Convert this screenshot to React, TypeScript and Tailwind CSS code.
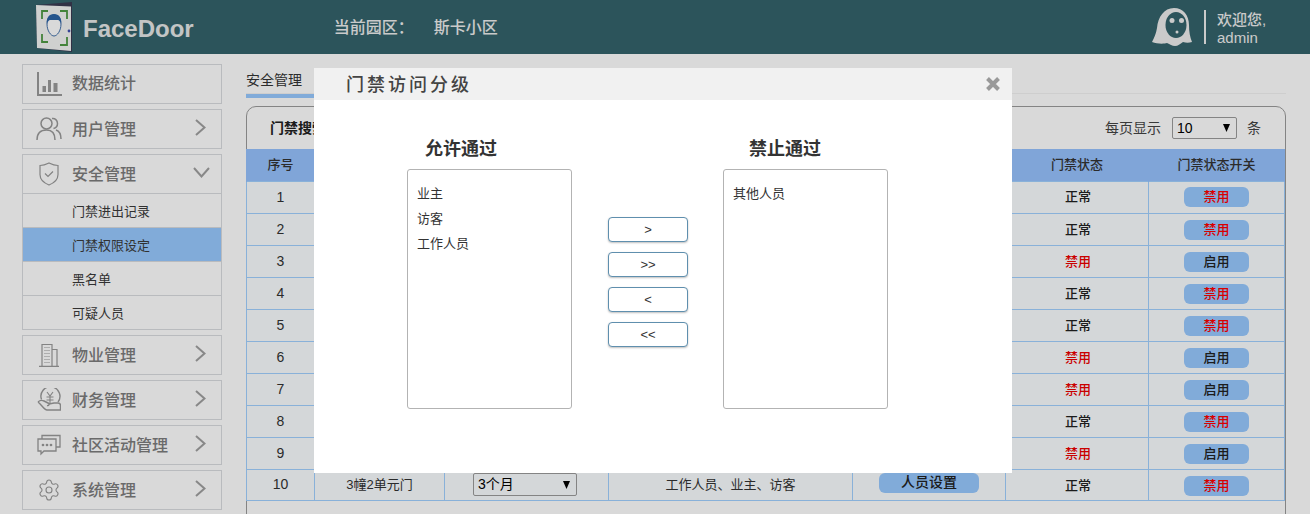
import type { ReactNode } from "react";
import { Settings } from "lucide-react";

const FONT = "font-['Liberation_Sans','Noto_Sans_CJK_SC',sans-serif]";

const IconChart = () => (
  <svg width="26" height="26" viewBox="0 0 26 26" fill="none">
    <path d="M2 1v23h24" stroke="#9a9a9a" strokeWidth="2" />
    <rect x="6.5" y="15" width="3.5" height="6" fill="#9a9a9a" />
    <rect x="12" y="9" width="3" height="12" fill="#9a9a9a" />
    <rect x="17.5" y="12" width="4" height="9" fill="#9a9a9a" />
  </svg>
);
const IconUsers = () => (
  <svg width="26" height="26" viewBox="0 0 26 26" fill="none" stroke="#9a9a9a" strokeWidth="1.5">
    <circle cx="10.5" cy="7.5" r="5.5" />
    <path d="M1 24c0-7 4-10 9.5-10S19 17 19 24" />
    <path d="M16 2.500c3-.6 5.500 1.800 5.500 5 0 2.500-1.500 4.500-4 5" />
    <path d="M20 14c3 1 5 4 5 9" />
  </svg>
);
const IconShield = () => (
  <svg width="20" height="24" viewBox="0 0 20 24" fill="none" stroke="#9a9a9a" strokeWidth="1.2">
    <path d="M1 3.500C4 3.500 7 2.500 10 1c3 1.500 6 2.500 9 2.500v9c0 5-4 8.500-9 10.500C5 21 1 17.500 1 12.500z" />
    <path d="M6 11.500l3 3 5-5" />
  </svg>
);
const IconBuilding = () => (
  <svg width="20" height="24" viewBox="0 0 20 24" fill="none" stroke="#9a9a9a">
    <path d="M0 23.500h20" strokeWidth="1.500" />
    <path d="M3 23V1.500h10V23M13 6.500h5V23" strokeWidth="1.200" />
    <path d="M5.500 4.500h5M5.500 7.500h5M5.500 10.500h5M5.500 13.500h5M5.500 16.500h5M5.500 19.500h5" strokeWidth="1.200" strokeDasharray="1 1" />
  </svg>
);
const IconMoney = () => (
  <svg width="24" height="24" viewBox="0 0 24 24" fill="none" stroke="#9a9a9a" strokeWidth="1.400">
    <path d="M4.500 11.500A9.500 9.500 0 1 1 21 14" />
    <path d="M10 4l3 4 3-4M9.500 9h7M9.500 12h7M13 8v7" strokeWidth="1.100" />
    <path d="M1 14c2-2 4-2 6-1l4 2c2 1 1 3-1 2.500M12 16l5-1h4c2 0 2.500 1 2.500 2.500V22H10c-3 0-5-5-9-8" />
  </svg>
);
const IconChat = () => (
  <svg width="24" height="22" viewBox="0 0 24 22" fill="none" stroke="#9a9a9a" strokeWidth="1.300">
    <path d="M1 5h18v12H7l-3 3v-3H1z" />
    <path d="M5 5V1.500h18V13h-4" />
    <circle cx="6" cy="11" r=".7" fill="#9a9a9a" />
    <circle cx="10" cy="11" r=".7" fill="#9a9a9a" />
    <circle cx="14" cy="11" r=".7" fill="#9a9a9a" />
  </svg>
);

const ChevronR = () => (
  <svg width="11" height="17" viewBox="0 0 11 17" fill="none" className="mr-[15px] mb-[4px] ml-auto">
    <path d="M1 1l8.500 7.500L1 16" stroke="#a0a0a0" strokeWidth="2" />
  </svg>
);
const ChevronD = () => (
  <svg width="17" height="11" viewBox="0 0 17 11" fill="none" className="mr-[11px] mb-[4px] ml-auto">
    <path d="M1 1l7.500 8.500L16 1" stroke="#a0a0a0" strokeWidth="2" />
  </svg>
);

function NavHead({ icon, label, open, arrow = true }: { icon: ReactNode; label: string; open?: boolean; arrow?: boolean }) {
  return (
    <div className="flex h-[38px] items-center">
      <div className="flex w-[49px] justify-center pl-[2px]">{icon}</div>
      <span className={`text-[16px] font-medium leading-none text-[#7d7d7d] ${arrow ? "pt-[2px]" : ""}`}>{label}</span>
      {arrow && (open ? <ChevronD /> : <ChevronR />)}
    </div>
  );
}

function NavItem(props: { icon: ReactNode; label: string; arrow?: boolean }) {
  return (
    <div className="border border-[#dadce0]">
      <NavHead {...props} />
    </div>
  );
}

const subs = ["门禁进出记录", "门禁权限设定", "黑名单", "可疑人员"];

function Sidebar() {
  return (
    <aside className="flex w-[200px] shrink-0 flex-col gap-[5px]">
      <NavItem icon={<IconChart />} label="数据统计" arrow={false} />
      <NavItem icon={<IconUsers />} label="用户管理" />
      <div className="border border-[#dadce0]">
        <NavHead icon={<IconShield />} label="安全管理" open />
        {subs.map((s, i) => (
          <div
            key={s}
            className={`flex h-[34px] items-center border-t border-[#dadce0] pl-[49px] pt-[2px] text-[13px] text-[#3a3a3a] ${i === 1 ? "bg-[#98c9ff]" : ""}`}
          >
            {s}
          </div>
        ))}
      </div>
      <NavItem icon={<IconBuilding />} label="物业管理" />
      <NavItem icon={<IconMoney />} label="财务管理" />
      <NavItem icon={<IconChat />} label="社区活动管理" />
      <NavItem icon={<Settings size={24} strokeWidth={1.1} color="#9a9a9a" />} label="系统管理" />
    </aside>
  );
}

const status = ["正常", "正常", "禁用", "正常", "正常", "禁用", "禁用", "正常", "禁用", "正常"];

function SelectBox({ value, className }: { value: string; className: string }) {
  return (
    <div className={`flex items-center justify-between rounded-[2px] border border-[#9c9c9c] pl-[4px] pr-[6px] text-[14px] text-black ${className}`}>
      <span>{value}</span>
      <svg width="7" height="8" viewBox="0 0 7 8">
        <path d="M0 0h7L3.500 8z" fill="#000" />
      </svg>
    </div>
  );
}

function DataTable() {
  const cell = "border border-[#a2d0ff] text-center align-middle";
  return (
    <table className="-ml-px w-[calc(100%+1px)] table-fixed border-collapse text-[13px] text-[#333]">
      <colgroup>
        <col className="w-[68px]" />
        <col className="w-[130px]" />
        <col className="w-[164px]" />
        <col className="w-[244px]" />
        <col className="w-[153px]" />
        <col className="w-[143px]" />
        <col />
      </colgroup>
      <thead>
        <tr className="h-[32px] bg-[#97c2fe] font-medium">
          {["序号", "", "", "", "", "门禁状态", "门禁状态开关"].map((h, i) => (
            <th key={i} className="border-x border-[#97c2fe] font-medium">
              {h}
            </th>
          ))}
        </tr>
      </thead>
      <tbody>
        {status.map((s, i) => {
          const last = i === 9;
          return (
            <tr key={i} className={`${last ? "h-[31px]" : "h-[32px]"} bg-[#f9fdff]`}>
              <td className={`${cell} text-[14px]`}>{i + 1}</td>
              <td className={cell}>{last && "3幢2单元门"}</td>
              <td className={cell}>
                {last && <SelectBox value="3个月" className="ml-[28px] h-[23px] w-[104px] bg-[#f9fdff]" />}
              </td>
              <td className={cell}>{last && "工作人员、业主、访客"}</td>
              <td className={cell}>
                {last && (
                  <button className="mx-auto mb-[4px] block h-[20px] w-[100px] rounded-[6px] bg-[#98c9ff] text-[14px] font-medium leading-[17px] text-[#222]">
                    人员设置
                  </button>
                )}
              </td>
              <td className={`${cell} pl-[2px] font-medium ${i > 0 ? "pt-[2px]" : ""} ${s === "禁用" ? "text-[#ee0000]" : "text-[#222]"}`}>{s}</td>
              <td className={`${cell} ${i > 0 ? "pt-[2px]" : ""}`}>
                <button
                  className={`mx-auto block h-[20px] w-[65px] rounded-[6px] bg-[#98c9ff] text-[13px] font-medium ${s === "正常" ? "text-[#ff0000]" : "text-[#222]"}`}
                >
                  {s === "正常" ? "禁用" : "启用"}
                </button>
              </td>
            </tr>
          );
        })}
      </tbody>
    </table>
  );
}

function ListBox({ items }: { items: string[] }) {
  return (
    <div className="h-[240px] w-[165px] rounded-[3px] border border-[#b3b3b3] px-[9px] py-[11px] text-[13px] leading-[25px] text-[#333]">
      {items.map((t) => (
        <div key={t}>{t}</div>
      ))}
    </div>
  );
}

function Modal() {
  return (
    <div className="absolute left-[314px] top-[68px] z-10 h-[405px] w-[698px] bg-white">
      <div className="flex h-[32px] items-center justify-between bg-[#f1f1f1] pl-[32px] pr-[11px]">
        <span className="pt-[2px] text-[18px] font-medium tracking-[3px] text-[#444]">门禁访问分级</span>
        <svg width="16" height="16" viewBox="0 0 16 16">
          <path d="M2.500 2.500l11 11M13.500 2.500l-11 11" stroke="#999" strokeWidth="4" />
        </svg>
      </div>
      <div className="flex pl-[93px] pt-[36px]">
        <div>
          <h3 className="mb-[9px] pl-[18px] pt-[2px] text-[18px] font-bold leading-[22px] text-[#333]">允许通过</h3>
          <ListBox items={["业主", "访客", "工作人员"]} />
        </div>
        <div className="mx-[36px] mt-[81px] flex w-[80px] flex-col gap-[10px]">
          {[">", ">>", "<", "<<"].map((t) => (
            <button
              key={t}
              className="h-[25px] rounded-[4px] border border-[#5f8fae] bg-white text-[13px] leading-none text-[#333] shadow-[0_1px_2px_rgba(0,0,0,0.25)]"
            >
              {t}
            </button>
          ))}
        </div>
        <div className="-ml-px">
          <h3 className="mb-[9px] pl-[26px] pt-[2px] text-[18px] font-bold leading-[22px] text-[#333]">禁止通过</h3>
          <ListBox items={["其他人员"]} />
        </div>
      </div>
    </div>
  );
}

export default function App() {
  return (
    <div className={`relative h-[514px] w-[1310px] overflow-hidden bg-white ${FONT}`}>
      <header className="flex h-[54px] items-center bg-[#34636b]">
        <svg className="ml-[36px]" width="38" height="50" viewBox="0 0 38 50">
          <path d="M0 3l36-3v50L1 46z" fill="#3a3a52" />
          <path d="M0 3l35 1.500V49L1 46z" fill="#f4f5f4" />
          <g fill="none" stroke="#4f9a45" strokeWidth="1.800">
            <path d="M6 17V9h6M24 9h7v8M6 32v8h6M24 43h7v-8" />
          </g>
          <path d="M18 13c5 0 7 4 7 9 0 7-4 12-7 12s-7-5-7-12c0-5 2-9 7-9z" fill="#ffffff" stroke="#3f6ea8" strokeWidth="1" />
          <path d="M11 22c-1-6 2-10 7-10s8 4 7 10c-1-3-2-4-3-4h-8c-1 0-2 1-3 4z" fill="#2d64a6" />
          <circle cx="33" cy="29" r="1.400" fill="#3f4fb0" />
        </svg>
        <span className="ml-[9px] pt-[3px] text-[24px] font-bold leading-none text-[#e6e8e8]">FaceDoor</span>
        <span className="ml-[140px] pt-[2px] text-[16px] font-medium text-[#eeeeee]">当前园区：</span>
        <span className="ml-[20px] pt-[2px] text-[16px] font-medium text-[#eeeeee]">斯卡小区</span>
        <div className="ml-auto flex items-center">
          <svg width="40" height="38" viewBox="0 0 40 38">
            <path
              d="M22 0c9 0 15 7 15 17 0 7 1 12 3 17-3 1-6 1-9 0-3 2-5 4-8 4s-5-2-8-3c-3 1-10 1-15-1 2-4 4-8 5-14C6 9 12 0 22 0z"
              fill="#eeeeee"
            />
            <ellipse cx="24" cy="17" rx="10.500" ry="13" fill="#34636b" />
            <circle cx="20" cy="12.500" r="2.500" fill="#eeeeee" />
            <circle cx="29.500" cy="12.500" r="2.500" fill="#eeeeee" />
            <circle cx="25" cy="24" r="1.500" fill="#eeeeee" />
          </svg>
          <div className="ml-[12px] h-[34px] w-[2px] bg-[#eeeeee]" />
          <div className="ml-[11px] mr-[51px] w-[42px] pt-[2px] text-[#eeeeee]">
            <div className="whitespace-nowrap text-[15px] font-medium leading-[19px]">欢迎您,</div>
            <div className="text-[15px] leading-[18px]">admin</div>
          </div>
        </div>
      </header>

      <div className="flex pl-[22px] pr-[24px] pt-[10px]">
        <Sidebar />
        <main className="ml-[24px] min-w-0 flex-1">
          <div className="h-[30px] border-b border-[#f2f2f2]">
            <div className="h-[34px] w-[68px] border-b-[4px] border-[#98c9ff] pt-[7px] text-[14px] leading-[18px] text-[#333]">安全管理</div>
          </div>
          <section className="mt-[12px] h-[500px] rounded-t-[10px] border border-[#9c9c9c]">
            <div className="flex h-[42px] items-center pl-[23px] pr-[24px] text-[14px]">
              <span className="font-bold text-[#222]">门禁搜索</span>
              <span className="ml-auto text-[#444]">每页显示</span>
              <SelectBox value="10" className="ml-[11px] h-[22px] w-[65px]" />
              <span className="ml-[10px] text-[#444]">条</span>
            </div>
            <DataTable />
          </section>
        </main>
      </div>

      <div className="absolute inset-0 bg-black/15" />
      <Modal />
    </div>
  );
}
